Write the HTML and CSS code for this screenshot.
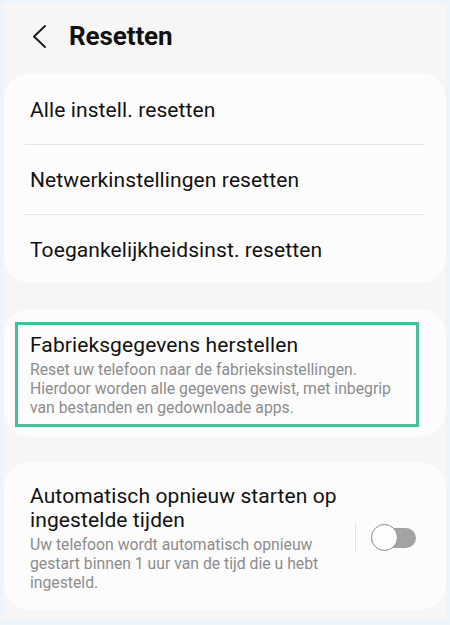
FILE: index.html
```html
<!DOCTYPE html>
<html lang="nl">
<head>
<meta charset="utf-8">
<title>Resetten</title>
<link rel="stylesheet" href="styles.css">
</head>
<body>
<div class="frame">
  <div class="screen">
    <header class="header">
      <svg class="back" width="16" height="26" viewBox="0 0 16 26" aria-hidden="true">
        <polyline points="13,2 2,12.5 13,23" fill="none" stroke="#1c1c1c" stroke-width="2" stroke-linecap="round" stroke-linejoin="round"/>
      </svg>
      <h1 class="title">Resetten</h1>
    </header>

    <section class="card list">
      <div class="row">Alle instell. resetten</div>
      <div class="divider"></div>
      <div class="row">Netwerkinstellingen resetten</div>
      <div class="divider"></div>
      <div class="row last">Toegankelijkheidsinst. resetten</div>
    </section>

    <section class="card factory">
      <div class="highlight">
        <div class="item-title">Fabrieksgegevens herstellen</div>
        <div class="item-desc">Reset uw telefoon naar de fabrieksinstellingen. Hierdoor worden alle gegevens gewist, met inbegrip van bestanden en gedownloade apps.</div>
      </div>
    </section>

    <section class="card auto">
      <div class="auto-text">
        <div class="item-title">Automatisch opnieuw starten op ingestelde tijden</div>
        <div class="item-desc">Uw telefoon wordt automatisch opnieuw gestart binnen 1 uur van de tijd die u hebt ingesteld.</div>
      </div>
      <div class="vdivider"></div>
      <div class="toggle"><span class="knob"></span></div>
    </section>
  </div>
</div>
</body>
</html>
```

FILE: styles.css
```css
* { box-sizing: border-box; }
html, body { margin: 0; padding: 0; }
body {
  font-family: Roboto, "Noto Sans", "Liberation Sans", sans-serif;
  background: #edf4fb;
  color: #111;
}
.frame {
  width: 450px;
  height: 625px;
  padding: 3px 4px 5px 3px;
  background: #edf4fb;
}
.screen {
  height: 617px;
  background: #f6f6f6;
  display: flex;
  flex-direction: column;
  overflow: hidden;
}
.header {
  height: 70px;
  display: flex;
  align-items: flex-start;
  padding-top: 20px;
  padding-left: 29px;
}
.back { display: block; margin-top: 1px; }
.title {
  margin: 0 0 0 21px;
  font-size: 26px;
  line-height: 26px;
  font-weight: 700;
  color: #111;
  letter-spacing: -0.1px;
}
.card {
  background: #fcfcfc;
  border-radius: 26px;
  margin-left: 1px;
}
.list { padding-top: 2px; }
.row {
  font-size: 21px;
  line-height: 24px;
  letter-spacing: 0.1px;
  padding: 23px 0 22px 26px;
  color: #111;
}
.row.last { padding-bottom: 21px; }
.divider {
  height: 1px;
  background: #e4e4e4;
  margin: 0 21px;
}
.factory {
  margin-top: 26px;
  padding: 13px 27px 10px 11px;
}
.highlight {
  border: 3px solid #45c09a;
  padding: 8px 10px 7px 12px;
}
.item-title {
  font-size: 21px;
  line-height: 24px;
  letter-spacing: 0.1px;
  color: #111;
}
.item-desc {
  margin-top: 3px;
  font-size: 15.75px;
  line-height: 19px;
  color: #8c8c8c;
}
.auto {
  margin-top: 25px;
  display: flex;
  align-items: center;
  padding: 22px 30px 18px 26px;
}
.auto-text { width: 316px; }
.vdivider {
  width: 1px;
  height: 28px;
  background: #e4e4e4;
  margin-left: 12px;
}
.toggle {
  position: relative;
  width: 46px;
  height: 20px;
  margin-left: 15px;
  border-radius: 10px;
  background: #a3a3a3;
}
.knob {
  position: absolute;
  left: 0;
  top: -4px;
  width: 27px;
  height: 27px;
  border-radius: 50%;
  background: #fdfdfd;
  border: 1.5px solid #8e8e8e;
}
```
